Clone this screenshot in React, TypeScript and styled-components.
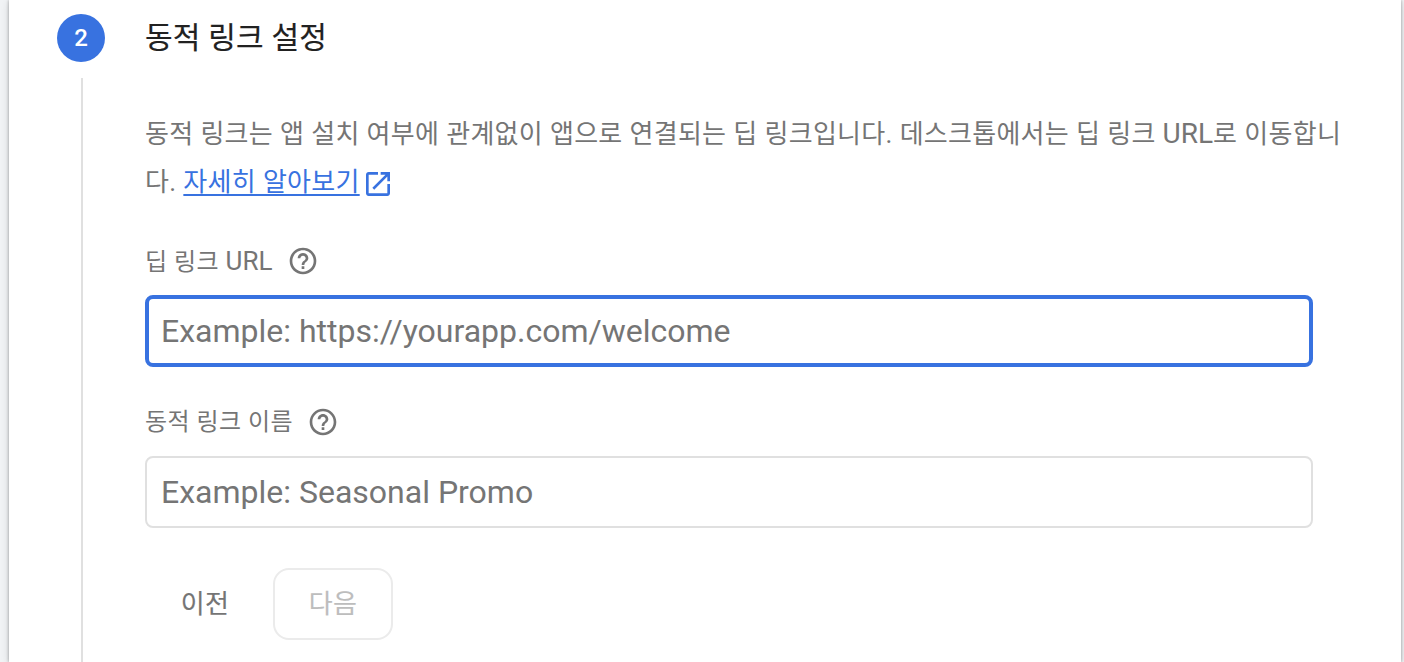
import React from "react";
import styled, { createGlobalStyle } from "styled-components";

const BLUE = "#3872e0";
const GREY = "#757575";

const GlobalStyle = createGlobalStyle`
  * { box-sizing: border-box; }
  body {
    margin: 0;
    background: #f1f3f5;
    font-family: Roboto, "Noto Sans CJK KR", sans-serif;
    color: ${GREY};
    overflow: hidden;
  }
`;

const Page = styled.div`
  height: 662px;
  padding: 0 3px 0 9px;
  overflow: hidden;
`;

const Card = styled.main`
  display: flex;
  gap: 40px;
  height: 662px;
  padding: 14px 0 0 48px;
  background: #fff;
  box-shadow: 0 0 3px rgba(0, 0, 0, 0.32), 0 2px 8px rgba(0, 0, 0, 0.14);
`;

const Rail = styled.div`
  display: flex;
  flex-direction: column;
  align-items: center;
  width: 48px;
  flex: none;
`;

const StepNumber = styled.div`
  width: 48px;
  height: 48px;
  border-radius: 50%;
  background: ${BLUE};
  color: #fff;
  font-size: 24px;
  font-weight: 500;
  line-height: 48px;
  text-align: center;
`;

const RailLine = styled.div`
  width: 2px;
  flex: 1;
  margin: 16px 0 0 2px;
  background: #e0e0e0;
`;

const Content = styled.section`
  flex: 1;
  min-width: 0;
`;

const Title = styled.h2`
  margin: 0;
  height: 48px;
  line-height: 48px;
  font-size: 30px;
  font-weight: 400;
  letter-spacing: 0.2px;
  -webkit-text-stroke: 0.2px #212121;
  color: #212121;
`;

const Description = styled.p`
  margin: 48px 0 0;
  font-size: 26px;
  line-height: 48px;
  letter-spacing: 0.27px;
  word-spacing: 0.3px;
  white-space: nowrap;
`;

const Latin = styled.span<{ $size: number }>`
  font-size: ${(p) => p.$size}px;
  letter-spacing: 0;
`;

const Link = styled.a`
  color: ${BLUE};
  text-decoration: underline;
  text-decoration-thickness: 2px;
  text-underline-offset: 3px;
`;

const LinkIcon = styled.svg`
  width: 32px;
  height: 32px;
  margin-left: 2px;
  vertical-align: -9px;
  fill: ${BLUE};
`;

const Field = styled.div<{ $top: number }>`
  margin-top: ${(p) => p.$top}px;
  width: 1168px;
`;

const Label = styled.label`
  display: flex;
  align-items: center;
  height: 40px;
  gap: 14px;
  font-size: 24px;
  line-height: 40px;
  letter-spacing: 0.37px;
  word-spacing: 0.3px;
`;

const HelpSvg = styled.svg`
  width: 32px;
  height: 32px;
  fill: ${GREY};
`;

const Input = styled.input<{ $focused?: boolean }>`
  display: block;
  width: 100%;
  height: 72px;
  margin-top: 14px;
  padding: 0 ${(p) => (p.$focused ? 12 : 14)}px;
  border: ${(p) => (p.$focused ? `4px solid ${BLUE}` : "2px solid #e0e0e0")};
  border-radius: 8px;
  outline: none;
  background: #fff;
  font-family: Roboto, sans-serif;
  font-size: 32px;
  &::placeholder { color: ${GREY}; opacity: 1; }
`;

const Actions = styled.div`
  display: flex;
  gap: 8px;
  margin-top: 40px;
`;

const Button = styled.button<{ $outlined?: boolean }>`
  width: 120px;
  height: 72px;
  padding: 0 0 6px;
  border: 2px solid ${(p) => (p.$outlined ? "#ebebeb" : "transparent")};
  border-radius: 16px;
  background: transparent;
  font-family: Roboto, "Noto Sans CJK KR", sans-serif;
  font-size: 26px;
  font-weight: 400;
  letter-spacing: 0.4px;
  -webkit-text-stroke: 0.15px currentColor;
  color: ${(p) => (p.$outlined ? "#bdbdbd" : GREY)};
`;

const HelpIcon = () => (
  <HelpSvg viewBox="0 0 24 24">
    <path d="M11 18h2v-2h-2v2zm1-16C6.48 2 2 6.48 2 12s4.48 10 10 10 10-4.48 10-10S17.52 2 12 2zm0 18c-4.41 0-8-3.59-8-8s3.59-8 8-8 8 3.59 8 8-3.59 8-8 8zm0-14c-2.21 0-4 1.79-4 4h2c0-1.1.9-2 2-2s2 .9 2 2c0 2-3 1.75-3 5h2c0-2.25 3-2.5 3-5 0-2.21-1.79-4-4-4z" />
  </HelpSvg>
);

export default function App() {
  return (
    <>
      <GlobalStyle />
      <Page>
        <Card>
          <Rail>
            <StepNumber>2</StepNumber>
            <RailLine />
          </Rail>
          <Content>
            <Title>동적 링크 설정</Title>
            <Description>
              동적 링크는 앱 설치 여부에 관계없이 앱으로 연결되는 딥 링크입니다. 데스크톱에서는 딥 링크 <Latin $size={28}>URL</Latin>로 이동합니
              <br />
              다. <Link>자세히 알아보기</Link>
              <LinkIcon viewBox="0 0 24 24">
                <path d="M19 19H5V5h7V3H5c-1.11 0-2 .9-2 2v14c0 1.1.89 2 2 2h14c1.1 0 2-.9 2-2v-7h-2v7zM14 3v2h3.59l-9.83 9.83 1.41 1.41L19 6.41V10h2V3h-7z" />
              </LinkIcon>
            </Description>
            <Field $top={35}>
              <Label>
                <span>딥 링크 <Latin $size={26}>URL</Latin></span>
                <HelpIcon />
              </Label>
              <Input $focused placeholder="Example: https://yourapp.com/welcome" />
            </Field>
            <Field $top={35}>
              <Label>
                <span>동적 링크 이름</span>
                <HelpIcon />
              </Label>
              <Input placeholder="Example: Seasonal Promo" />
            </Field>
            <Actions>
              <Button>이전</Button>
              <Button $outlined disabled>다음</Button>
            </Actions>
          </Content>
        </Card>
      </Page>
    </>
  );
}
